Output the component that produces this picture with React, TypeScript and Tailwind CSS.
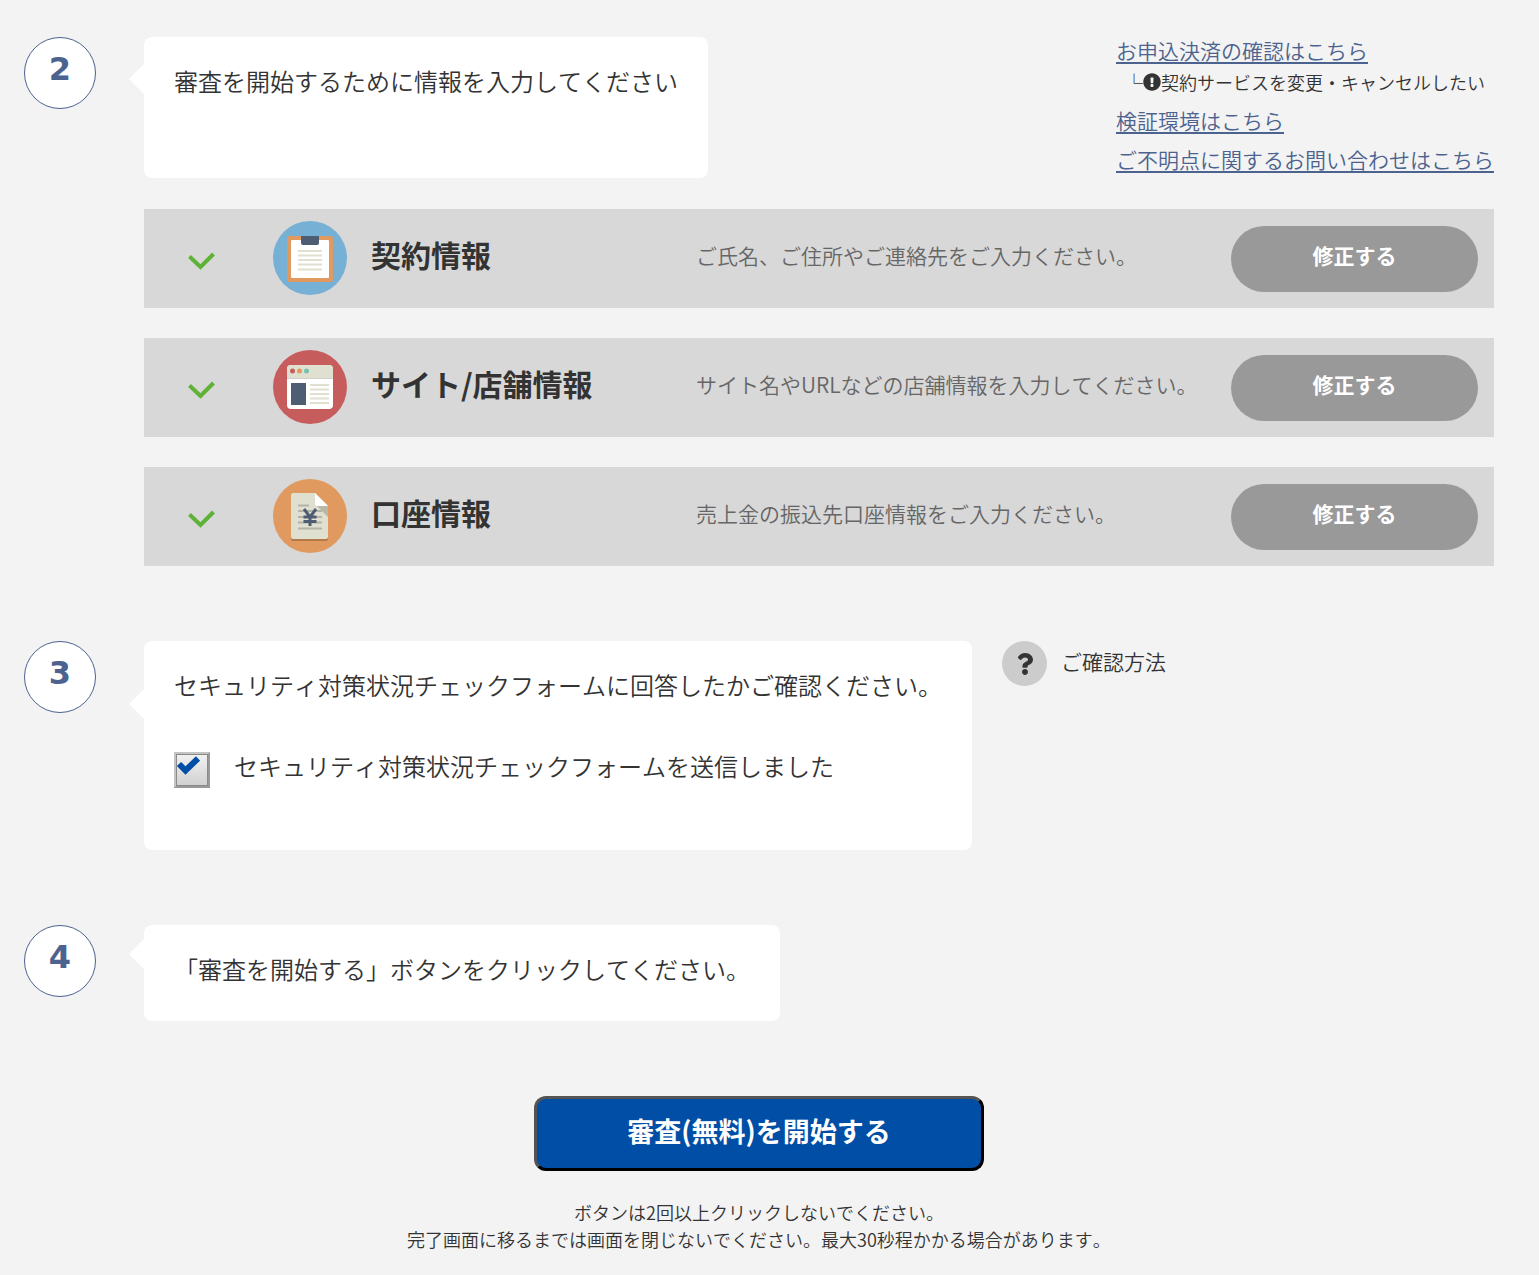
import React, { useState } from 'react';
import { FaExclamationCircle, FaQuestion } from 'react-icons/fa';

interface InfoItem {
  title: string;
  description: string;
  icon: React.ReactNode;
}

const ClipboardIcon = () => (
  <svg viewBox="0 0 74 74" className="size-full" aria-hidden="true">
    <circle cx="37" cy="37" r="37" fill="#76b1d5" />
    <rect x="14" y="15" width="46" height="46" rx="3" fill="#e0995e" />
    <rect x="18" y="19" width="38" height="38" rx="1" fill="#fff" />
    <path d="M28 15h18v7a2 2 0 0 1-2 2H30a2 2 0 0 1-2-2z" fill="#4f5d73" />
    <path d="M25 30h24M25 34.500h24M25 39h24M25 43.500h24M25 48.500h24" stroke="#e0e0d1" strokeWidth="2" />
  </svg>
);

const BrowserIcon = () => (
  <svg viewBox="0 0 74 74" className="size-full" aria-hidden="true">
    <circle cx="37" cy="37" r="37" fill="#c75c5c" />
    <rect x="14" y="15" width="46" height="44" rx="4" fill="#fff" />
    <path d="M14 28.500V19a4 4 0 0 1 4-4h38a4 4 0 0 1 4 4v9.500z" fill="#e0e0d1" />
    <path d="M14 28.500h46" stroke="#d0d0c8" strokeWidth="1" />
    <circle cx="19.500" cy="21" r="2.500" fill="#c75c5c" />
    <circle cx="26.500" cy="21" r="2.500" fill="#e0995e" />
    <circle cx="33.500" cy="21" r="2.500" fill="#76c2af" />
    <rect x="18" y="33" width="15" height="22" fill="#4f5d73" />
    <path d="M37 35h19M37 39.500h19M37 44h19M37 48.500h19M37 53h19" stroke="#e0e0d1" strokeWidth="2" />
  </svg>
);

const BillIcon = () => (
  <svg viewBox="0 0 74 74" className="size-full" aria-hidden="true">
    <circle cx="37" cy="37" r="37" fill="#e0995e" />
    <path d="M18 18v42a2 2 0 0 0 2 2h33a2 2 0 0 0 2-2v-4z" fill="#b37a4b" />
    <path d="M18 16a2 2 0 0 1 2-2h22l13 13v31a2 2 0 0 1-2 2H20a2 2 0 0 1-2-2z" fill="#e0e0d1" />
    <path d="M44 27h11v11z" fill="#b8b8a8" />
    <path d="M42 14l13 13H44a2 2 0 0 1-2-2z" fill="#fff" />
    <path d="M25 26.500h11M25 32h24M25 38h24M25 43.500h24M25 49.500h24" stroke="#b3b3a7" strokeWidth="2" />
    <path d="M31 30l6 8 6-8M37 38v9M30.500 38h13M30.500 42.500h13" fill="none" stroke="#4f5d73" strokeWidth="3" />
  </svg>
);

const items: InfoItem[] = [
  { title: '契約情報', description: 'ご氏名、ご住所やご連絡先をご入力ください。', icon: <ClipboardIcon /> },
  { title: 'サイト/店舗情報', description: 'サイト名やURLなどの店舗情報を入力してください。', icon: <BrowserIcon /> },
  { title: '口座情報', description: '売上金の振込先口座情報をご入力ください。', icon: <BillIcon /> },
];

const StepNumber = ({ children }: { children: React.ReactNode }) => (
  <div className="flex size-[72px] shrink-0 justify-center rounded-full border border-[#4c638f] bg-white pt-[11px] font-['DejaVu_Sans',sans-serif] text-[32px] leading-10 font-bold text-[#4c638f]">
    {children}
  </div>
);

const Bubble = ({ className, children }: { className: string; children: React.ReactNode }) => (
  <div className={`relative rounded-lg bg-white px-[30px] pt-[26px] text-2xl leading-9 ${className}`}>
    <span className="absolute top-[30%] -left-[15px] -translate-y-1/2 border-y-[15px] border-r-[15px] border-y-transparent border-r-white" />
    {children}
  </div>
);

const InfoRow = ({ item }: { item: InfoItem }) => (
  <li className="flex h-[99px] items-center bg-[#d8d8d8] pr-4 pl-11">
    <svg viewBox="0 0 27 18" className="mt-1 w-[27px] shrink-0" aria-label="入力済み">
      <path d="M1.500 4.500l11 10.500L25.500 2" fill="none" stroke="#5eb236" strokeWidth="4" />
    </svg>
    <div className="mb-[2px] ml-[58px] size-[74px] shrink-0">{item.icon}</div>
    <h3 className="ml-6 w-[325px] shrink-0 pb-[10px] text-3xl leading-9 font-bold">{item.title}</h3>
    <p className="flex-1 pb-2 text-[21px] leading-8 whitespace-nowrap text-[#666]">{item.description}</p>
    <button
      type="button"
      className="h-[66px] w-[247px] shrink-0 rounded-full bg-[#999] pb-[6px] text-[21px] font-bold text-white hover:bg-[#888]"
    >
      修正する
    </button>
  </li>
);

const HelpLinks = () => (
  <nav className="-mt-[2px] flex flex-col text-[21px] leading-[30px] whitespace-nowrap text-[#4c638f]">
    <a href="#payment" className="self-start underline decoration-2 underline-offset-3">お申込決済の確認はこちら</a>
    <a href="#change" className="mt-[3px] flex items-center self-start pl-[9px] text-lg leading-7 text-[#333]">
      └<FaExclamationCircle className="size-[18px]" />契約サービスを変更・キャンセルしたい
    </a>
    <a href="#sandbox" className="mt-[9px] self-start underline decoration-2 underline-offset-3">検証環境はこちら</a>
    <a href="#contact" className="mt-[9px] self-start underline decoration-2 underline-offset-3">ご不明点に関するお問い合わせはこちら</a>
  </nav>
);

const App: React.FC = () => {
  const [isSent, setIsSent] = useState(true);

  return (
    <main className="min-h-screen bg-[#f3f3f3] pt-[37px] pr-[45px] pb-5 pl-6 font-['Noto_Sans_CJK_JP',sans-serif] font-[350] text-[#333] [font-kerning:none]">
      <section className="flex gap-12">
        <StepNumber>2</StepNumber>
        <div className="min-w-0 flex-1">
          <div className="flex items-start justify-between">
            <Bubble className="pb-[79px]">
              <h2>審査を開始するために情報を入力してください</h2>
            </Bubble>
            <HelpLinks />
          </div>
          <ul className="mt-[31px] flex flex-col gap-[30px]">
            {items.map((item) => (
              <InfoRow key={item.title} item={item} />
            ))}
          </ul>
        </div>
      </section>

      <section className="mt-[75px] flex gap-12">
        <StepNumber>3</StepNumber>
        <div className="flex items-start gap-[30px]">
          <Bubble className="pb-[62px]">
            <h2>セキュリティ対策状況チェックフォームに回答したかご確認ください。</h2>
            <label className="mt-[45px] flex h-10 items-start gap-6">
              <span className="relative mt-1 size-9 shrink-0">
                <input
                  type="checkbox"
                  checked={isSent}
                  onChange={(e) => setIsSent(e.target.checked)}
                  className="peer block size-9 appearance-none border-2 border-[#c4c4c4] border-r-[#999] border-b-[#999] bg-linear-to-b from-[#f2f2f2] to-[#d0d0d0] inset-ring inset-ring-[#8a8a8a]"
                />
                <svg viewBox="0 0 24 20" className="pointer-events-none absolute top-[3px] left-[2px] hidden w-6 peer-checked:block" aria-hidden="true">
                  <path d="M3 9l6.500 6.500L22 3.500" fill="none" stroke="#004ea6" strokeWidth="6" />
                </svg>
              </span>
              <span>セキュリティ対策状況チェックフォームを送信しました</span>
            </label>
          </Bubble>
          <a href="#howto" className="flex items-center gap-[14px] text-[21px]">
            <span className="flex size-[45px] items-center justify-center rounded-full bg-[#ccc]">
              <FaQuestion className="size-[22px]" />
            </span>
            <span className="pb-[3px]">ご確認方法</span>
          </a>
        </div>
      </section>

      <section className="mt-[75px] flex gap-12">
        <StepNumber>4</StepNumber>
        <Bubble className="pb-[34px]">
          <h2>「審査を開始する」ボタンをクリックしてください。</h2>
        </Bubble>
      </section>

      <div className="mt-[75px] flex flex-col items-center">
        <button
          type="button"
          className="h-[75px] w-[450px] rounded-xl border-[3px] border-black bg-[#004ea6] pb-1 text-[27px] font-bold text-white [border-style:outset]"
        >
          審査(無料)を開始する
        </button>
        <p className="mt-7 text-center text-lg leading-[27px]">
          ボタンは2回以上クリックしないでください。
          <br />
          完了画面に移るまでは画面を閉じないでください。最大30秒程かかる場合があります。
        </p>
      </div>
    </main>
  );
};

export default App;
